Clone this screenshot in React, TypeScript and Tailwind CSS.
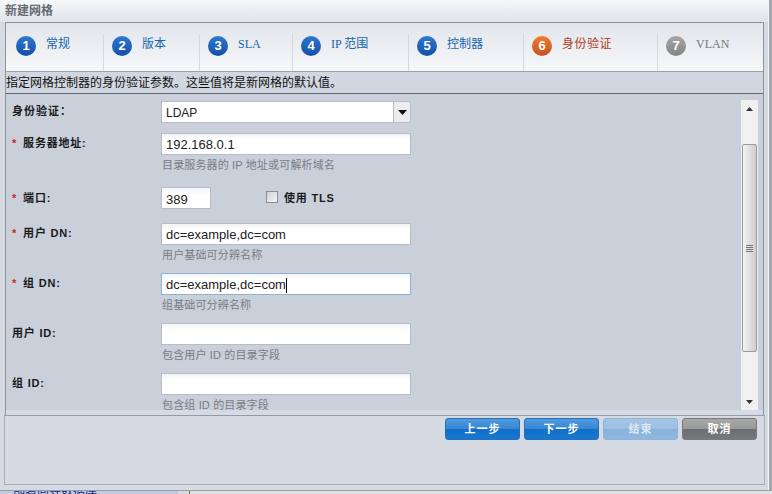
import React from 'react';

const cjk = "font-['Liberation_Sans','Noto_Sans_CJK_SC',sans-serif]";

const steps = [
  { n: 1, label: '常规', w: 'w-[96px]', state: 'done' },
  { n: 2, label: '版本', w: 'w-[96px]', state: 'done' },
  { n: 3, label: 'SLA', w: 'w-[93px]', state: 'done' },
  { n: 4, label: 'IP 范围', w: 'w-[116px]', state: 'done' },
  { n: 5, label: '控制器', w: 'w-[115px]', state: 'done' },
  { n: 6, label: '身份验证', w: 'w-[134px]', state: 'active' },
  { n: 7, label: 'VLAN', w: 'flex-1', state: 'off' },
];

function Step({ n, label, w, state }: { n: number; label: string; w: string; state: string }) {
  const circle =
    state === 'active'
      ? 'bg-gradient-to-b from-[#ee7d2e] to-[#c9501a]'
      : state === 'off'
      ? 'bg-gradient-to-b from-[#a5a5a5] to-[#858585]'
      : 'bg-gradient-to-b from-[#2f78d0] to-[#134fa8]';
  const text = state === 'active' ? 'text-[#b0391c] tracking-[0.5px]' : state === 'off' ? 'text-[#777777]' : 'text-[#1566ad]';
  return (
    <div className={`${w} h-[37px] flex items-start pl-[8px] border-r border-[#d5d8dd] last:border-r-0`}>
      <div className={`${circle} w-5 h-5 mt-[2px] rounded-full flex items-center justify-center text-white text-[13px] font-bold font-['Liberation_Sans',sans-serif]`}>
        {n}
      </div>
      <span className={`ml-[10px] text-[12px] leading-[20px] font-['Liberation_Serif','Noto_Sans_CJK_SC',serif] ${text}`}>{label}</span>
    </div>
  );
}

function Field({
  label,
  req,
  hint,
  value,
  focus,
  cls,
}: {
  label: string;
  req?: boolean;
  hint: string;
  value: string;
  focus?: boolean;
  cls: string;
}) {
  return (
    <div className={`flex ${cls}`}>
      <div className="w-[155px] pl-[6px] shrink-0 text-[11px] leading-[20px] font-bold text-[#1a1a1a] tracking-[0.8px] whitespace-pre">
        {req && <span className="text-[#c8242b] mr-[6px]">*</span>}
        {label}
      </div>
      <div>
        <div
          className={`w-[250px] h-[22px] border bg-gradient-to-b from-[#f3f4f6] to-white to-30% flex items-center pt-[2px] pl-[4px] text-[13px] text-[#222] ${
            focus ? 'border-[#8fb2d3]' : 'border-[#b7bcc6]'
          }`}
        >
          {value}
          {focus && <span className="w-px h-[15px] bg-black" />}
        </div>
        <div className="mt-[3px] pl-px text-[11px] leading-[14px] text-[#777c84] tracking-[0.15px] whitespace-pre">{hint}</div>
      </div>
    </div>
  );
}

function Btn({ label, color }: { label: string; color: string }) {
  return (
    <div className={`w-[75px] h-[22px] rounded-[3px] border flex items-center justify-center text-[11px] font-bold tracking-[1px] ${color}`}>
      {label}
    </div>
  );
}

export default function App() {
  return (
    <div className={`w-[772px] h-[494px] overflow-hidden bg-[#9ea3ab] flex flex-col ${cjk}`}>
      <div className="flex h-[490px]">
        <div className="w-[769px] bg-[#d5dae3] border-r border-[#f4f5f7] flex flex-col">
          {/* titlebar */}
          <div className="h-[22px] pl-[5px] bg-gradient-to-b from-[#f7f8fa] to-[#dfe3ea] text-[12px] leading-[22px] font-bold text-[#666a72]">
            新建网格
          </div>

          <div className="ml-[5px] w-[759px] h-[393px] border-l border-r border-t border-[#8f9399] flex flex-col">
            {/* wizard steps */}
            <div className="h-[49px] shrink-0 pt-[11px] pl-[2px] flex bg-gradient-to-b from-[#e2e5eb] to-[#f6f7f9] border-b border-[#9b9fa6]">
              {steps.map((s) => (
                <Step key={s.n} {...s} />
              ))}
            </div>

            {/* description */}
            <div className="h-[22px] shrink-0 bg-[#d1d7e0] border-b border-[#5f6570] text-[12px] leading-[23px] text-[#111] whitespace-nowrap">
              指定网格控制器的身份验证参数。这些值将是新网格的默认值。
            </div>

            {/* form */}
            <div className="flex-1 min-h-0 flex flex-col bg-[#d5dae3]">
              <div className="flex-1 min-h-0 relative bg-[#cad0da] overflow-hidden">
                <div className="pt-[7px]">
                  <div className="flex h-[22px]">
                    <div className="w-[155px] pl-[6px] text-[11px] leading-[20px] font-bold text-[#1a1a1a] tracking-[1px]">身份验证：</div>
                    <div className="w-[250px] h-[22px] flex border border-[#b7bcc6] bg-white">
                      <div className="flex-1 pl-[4px] text-[12px] leading-[22px] text-[#222]">LDAP</div>
                      <div className="w-[17px] border-l border-[#b7bcc6] bg-[#ececec] flex items-center justify-center">
                        <svg width="9" height="5" viewBox="0 0 9 5"><path d="M0 0h9L4.5 5z" fill="#111" /></svg>
                      </div>
                    </div>
                  </div>
                  <Field cls="mt-[10px]" req label="服务器地址:" value="192.168.0.1" hint="目录服务器的 IP 地址或可解析域名" />
                  <div className="flex mt-[15px] h-[22px]">
                    <div className="w-[155px] pl-[6px] text-[11px] leading-[22px] font-bold text-[#1a1a1a] tracking-[0.8px]">
                      <span className="text-[#c8242b] mr-[6px]">*</span>端口:
                    </div>
                    <div className="w-[50px] h-[22px] border border-[#b7bcc6] bg-gradient-to-b from-[#f3f4f6] to-white to-30% pt-[1px] pl-[4px] text-[13px] leading-[22px] text-[#222]">389</div>
                    <div className="ml-[55px] mt-[4px] w-3 h-3 border border-[#8a8e95] bg-gradient-to-br from-[#cfd2d6] to-[#f5f5f5]" />
                    <div className="ml-[6px] text-[11px] leading-[22px] font-bold text-[#1a1a1a] tracking-[0.8px]">使用 TLS</div>
                  </div>
                  <Field cls="mt-[14px]" req label="用户 DN:" value="dc=example,dc=com" hint="用户基础可分辨名称" />
                  <Field cls="mt-[11px]" req focus label="组 DN:" value="dc=example,dc=com" hint="组基础可分辨名称" />
                  <Field cls="mt-[11px]" label="用户 ID:" value="" hint="包含用户 ID 的目录字段" />
                  <Field cls="mt-[11px]" label="组 ID:" value="" hint="包含组 ID 的目录字段" />
                </div>

                {/* scrollbar */}
                <div className="absolute top-[6px] bottom-0 right-[5px] w-[17px] bg-[#f0f0f0] flex flex-col items-center">
                  <svg className="mt-[7px]" width="7" height="4" viewBox="0 0 7 4"><path d="M3.5 0L7 4H0z" fill="#333" /></svg>
                  <div className="mt-[33px] w-[15px] h-[208px] rounded-[2px] border border-[#9a9a9a] bg-gradient-to-r from-[#f2f2f2] to-[#cfcfcf] flex flex-col items-center justify-center gap-px">
                    <span className="w-[7px] h-px bg-[#777]" />
                    <span className="w-[7px] h-px bg-[#777]" />
                    <span className="w-[7px] h-px bg-[#777]" />
                    <span className="w-[7px] h-px bg-[#777]" />
                  </div>
                  <svg className="mt-auto mb-[6px]" width="7" height="4" viewBox="0 0 7 4"><path d="M0 0h7L3.5 4z" fill="#333" /></svg>
                </div>
              </div>
              <div className="h-[5px] shrink-0" />
            </div>
          </div>

          {/* footer */}
          <div className="ml-[4px] w-[761px] flex-1 mb-[5px] border border-[#a9adb4] border-t-[#8e9bb0] bg-[#d5dae3] flex justify-end gap-1 pt-[2px] pr-[7px]">
            <Btn label="上一步" color="border-[#2a6fb4] text-white bg-[linear-gradient(#4e9be0_0%,#3a85d0_50%,#0f6ec9_50%,#1778d2_100%)]" />
            <Btn label="下一步" color="border-[#2a6fb4] text-white bg-[linear-gradient(#4e9be0_0%,#3a85d0_50%,#0f6ec9_50%,#1778d2_100%)]" />
            <Btn label="结束" color="border-[#8eb4d8] text-[#dfe7f0] bg-[linear-gradient(#a5c6e6_0%,#9bbfe2_50%,#88b2dc_50%,#90b8e0_100%)]" />
            <Btn label="取消" color="border-[#77797d] text-white bg-[linear-gradient(#a8a8a8_0%,#999999_50%,#6c6d70_50%,#77787c_100%)]" />
          </div>
        </div>
        <div className="flex-1 bg-[#a2a7ae]" />
      </div>

      {/* page behind the dialog, only its top edge shows */}
      <div className="flex-1 flex border-t border-[#9a9ea5] overflow-hidden">
        <div className="w-[178px] bg-[#c3cbe0] pl-[13px] text-[12px] leading-[12px] text-[#1b2f8a]">
          <div className="-mt-[6px]">部署向导数据库</div>
        </div>
        <div className="w-[12px] bg-[#d8dadd] border-r border-[#777]" />
        <div className="flex-1 bg-[#dedfe1]" />
      </div>
    </div>
  );
}
